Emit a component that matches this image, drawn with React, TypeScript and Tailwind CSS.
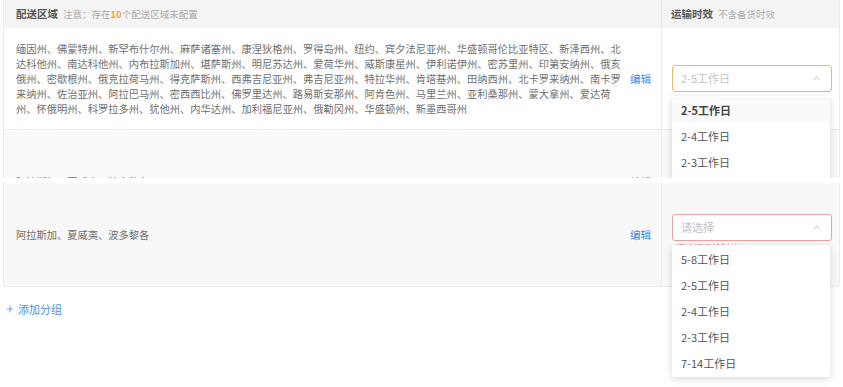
import { ChevronUp, Plus } from 'lucide-react';

const FONT = { fontFamily: '"Noto Sans CJK SC", "Noto Sans", sans-serif' };

const OPTIONS = ['5-8工作日', '2-5工作日', '2-4工作日', '2-3工作日', '7-14工作日'];

const STATES_1 =
  '缅因州、佛蒙特州、新罕布什尔州、麻萨诸塞州、康涅狄格州、罗得岛州、纽约、宾夕法尼亚州、华盛顿哥伦比亚特区、新泽西州、北达科他州、南达科他州、内布拉斯加州、堪萨斯州、明尼苏达州、爱荷华州、威斯康星州、伊利诺伊州、密苏里州、印第安纳州、俄亥俄州、密歇根州、俄克拉荷马州、得克萨斯州、西弗吉尼亚州、弗吉尼亚州、特拉华州、肯塔基州、田纳西州、北卡罗来纳州、南卡罗来纳州、佐治亚州、阿拉巴马州、密西西比州、佛罗里达州、路易斯安那州、阿肯色州、马里兰州、亚利桑那州、蒙大拿州、爱达荷州、怀俄明州、科罗拉多州、犹他州、内华达州、加利福尼亚州、俄勒冈州、华盛顿州、新墨西哥州';

const STATES_2 = '阿拉斯加、夏威夷、波多黎各';

function SelectBox({ value, error }: { value: string; error?: boolean }) {
  return (
    <div
      className={`flex h-[27px] w-[160px] items-center justify-between rounded-[3px] border bg-white pl-[8px] pr-[9px] ${
        error ? 'border-[#e9a3a3]' : 'border-[#f0b668]'
      }`}
    >
      <span className="text-[11px] text-[#c2c2c2]">{value}</span>
      <ChevronUp className="h-[11px] w-[11px] text-[#b5b5b5]" strokeWidth={2} />
    </div>
  );
}

function Menu({ items, selected }: { items: string[]; selected?: string }) {
  return (
    <div className="absolute left-0 top-[31px] z-10 w-[158px] rounded-[2px] bg-white py-[1px] shadow-[0_2px_8px_rgba(0,0,0,0.15)]">
      {items.map((item) => (
        <div
          key={item}
          className={`flex h-[26px] items-center px-[9px] text-[11px] ${
            item === selected ? 'bg-[#fafafa] font-bold text-[#444]' : 'text-[#555]'
          }`}
        >
          {item}
        </div>
      ))}
    </div>
  );
}

export default function App() {
  return (
    <div className="min-h-[387px] bg-white pl-[3px] pr-[3px]" style={FONT}>
      {/* first capture: header, big row, clipped second row */}
      <div className="h-[178px] overflow-hidden border-x border-[#ececec]">
        <div className="flex h-[28px] bg-[#f4f4f4]">
          <div className="flex w-[657px] items-center gap-[5px] pl-[12px]">
            <span className="text-[10.5px] font-bold text-[#555]">配送区域</span>
            <span className="text-[9.5px] text-[#aaa]">
              注意：存在<span className="font-bold text-[#f5a033]">10</span>个配送区域未配置
            </span>
          </div>
          <div className="flex flex-1 items-center gap-[5px] border-l border-[#e8e8e8] pl-[9px]">
            <span className="text-[10.5px] font-bold text-[#555]">运输时效</span>
            <span className="text-[9.5px] text-[#b0b0b0]">不含备货时效</span>
          </div>
        </div>

        <div className="flex h-[102px] border-b border-[#ededed] bg-white">
          <div className="flex w-[657px] items-center pl-[12px] pr-[10px]">
            <p className="w-[610px] text-[10.25px] leading-[15px] text-[#6f6f6f]">{STATES_1}</p>
            <span className="ml-auto text-[10.5px] text-[#3d8ee4]">编辑</span>
          </div>
          <div className="flex flex-1 items-center border-l border-[#ededed] pl-[10px]">
            <div className="relative">
              <SelectBox value="2-5工作日" />
              <Menu items={OPTIONS.slice(1)} selected="2-5工作日" />
            </div>
          </div>
        </div>

        <div className="flex h-[104px] bg-[#f9f9f9]">
          <div className="flex w-[657px] items-center pl-[12px] pr-[10px]">
            <p className="text-[10.25px] text-[#6f6f6f]">{STATES_2}</p>
            <span className="ml-auto text-[10.5px] text-[#3d8ee4]">编辑</span>
          </div>
          <div className="flex-1 border-l border-[#ededed]" />
        </div>
      </div>

      {/* second capture */}
      <div className="mt-[5px] flex h-[104px] rounded-b-[4px] border-x border-b border-[#ececec] bg-[#f8f8f8]">
        <div className="flex w-[657px] items-center pl-[12px] pr-[10px]">
          <p className="text-[10.25px] text-[#6f6f6f]">{STATES_2}</p>
          <span className="ml-auto text-[10.5px] text-[#3d8ee4]">编辑</span>
        </div>
        <div className="flex flex-1 flex-col justify-center border-l border-[#ececec] pl-[10px]">
          <div className="relative">
            <SelectBox value="请选择" error />
            <Menu items={OPTIONS} />
          </div>
          <span className="mt-[1px] h-[13px] pl-[4px] text-[9px] leading-[13px] text-[#ef6b6b]">请选择运输时效</span>
        </div>
      </div>

      <button className="mt-[14px] flex items-center gap-[3px] pl-[2px] text-[11px] text-[#4a8fe0]">
        <Plus className="h-[10px] w-[10px]" strokeWidth={2} />
        添加分组
      </button>
    </div>
  );
}
